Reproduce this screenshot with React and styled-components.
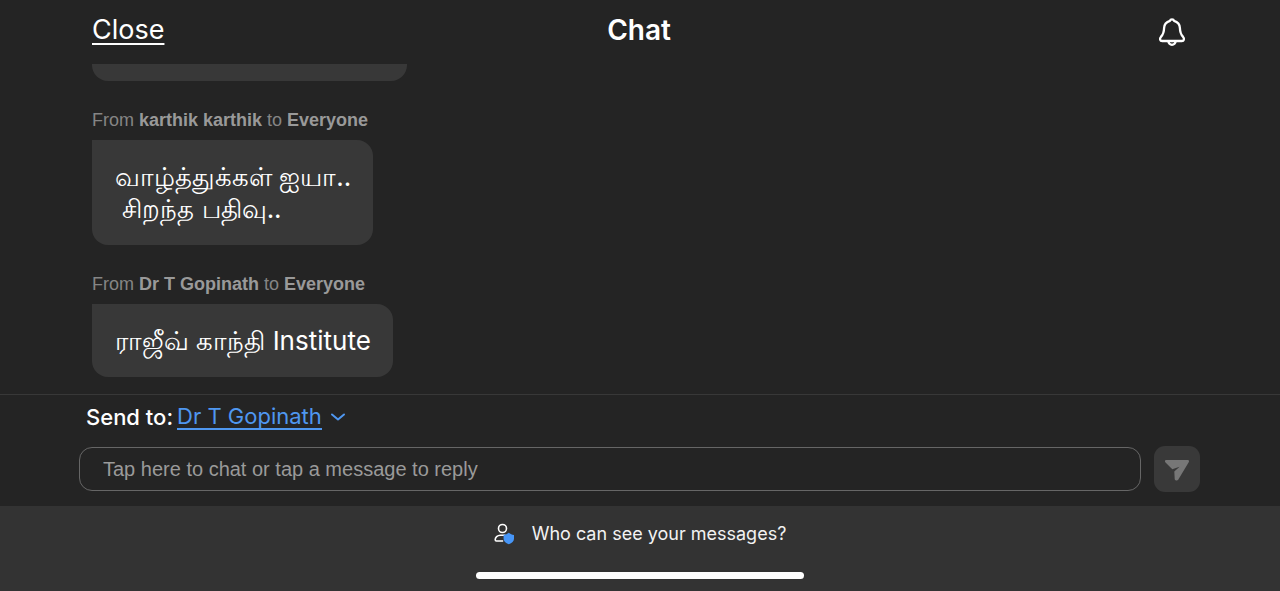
import styled, { createGlobalStyle } from "styled-components";

const GlobalStyle = createGlobalStyle`
  * {
    box-sizing: border-box;
  }

  body {
    margin: 0;
    background: #242424;
    color: #fff;
    font-family: Inter, "Noto Sans", sans-serif;
  }

  button,
  input,
  select {
    margin: 0;
    padding: 0;
    border: none;
    background: none;
    color: inherit;
    font: inherit;
  }
`;

const Wrapper = styled.div`
  display: flex;
  flex-direction: column;
  height: 100vh;
`;

const Header = styled.header`
  display: grid;
  grid-template-columns: 1fr auto 1fr;
  align-items: center;
  flex: none;
  height: 64px;
  padding: 0 94px 0 92px;
`;

const CloseButton = styled.button`
  justify-self: start;
  font-size: 27px;
  line-height: 32px;
  padding-bottom: 4px;
  text-decoration: underline;
  text-decoration-thickness: 2px;
  text-underline-offset: 4px;
`;

const Title = styled.h1`
  margin: 0;
  padding-bottom: 4px;
  font-size: 28px;
  font-weight: 600;
  line-height: 32px;
`;

const BellButton = styled.button`
  display: flex;
  justify-self: end;
`;

// 메시지가 넘치면 위쪽이 잘리도록 아래 정렬
const MessageList = styled.main`
  display: flex;
  flex: 1;
  flex-direction: column;
  justify-content: flex-end;
  align-items: flex-start;
  gap: 27px;
  min-height: 0;
  padding: 0 92px 17px;
  overflow: hidden;
`;

const Message = styled.article`
  flex: none;
`;

const Sender = styled.p`
  margin: 0 0 8px;
  color: #858585;
  font-family: "Liberation Sans", Arial, sans-serif;
  font-size: 18px;
  line-height: 24px;

  b {
    color: #999;
  }
`;

const Bubble = styled.div`
  width: fit-content;
  min-width: ${({ $minWidth }) => $minWidth || 0};
  min-height: 72px;
  padding: 21px 22px 20px 23px;
  border-radius: 0 16px 16px 16px;
  background: #383838;
  font-size: 26px;
  line-height: 32px;
  white-space: pre-wrap;
`;

const Composer = styled.form`
  flex: none;
  padding: 8px 80px 14px 79px;
  border-top: 1px solid #383838;
`;

const Recipient = styled.div`
  display: flex;
  align-items: center;
  gap: 4px;
  padding: 0 7px;
  font-size: 22px;
  line-height: 28px;
`;

const RecipientLabel = styled.label`
  font-weight: 500;
`;

const RecipientSelect = styled.select`
  appearance: none;
  field-sizing: content;
  margin-right: 4px;
  border-bottom: 2px solid #4f97f0;
  color: #4f97f0;
  line-height: 24px;
`;

const InputRow = styled.div`
  display: flex;
  align-items: center;
  gap: 13px;
  margin-top: 15px;
`;

const ChatInput = styled.input`
  flex: 1;
  min-width: 0;
  height: 44px;
  padding: 0 23px;
  border: 1px solid #666;
  border-radius: 13px;
  font-family: "Liberation Sans", Arial, sans-serif;
  font-size: 20px;

  &::placeholder {
    color: #9a9a9a;
    opacity: 1;
  }
`;

const SendButton = styled.button`
  display: flex;
  justify-content: center;
  align-items: center;
  width: 46px;
  height: 46px;
  border-radius: 11px;
  background: #393939;
`;

const Footer = styled.footer`
  display: flex;
  flex: none;
  flex-direction: column;
  align-items: center;
  gap: 24px;
  padding: 14px 0 12px;
  background: #333;
`;

const PrivacyButton = styled.button`
  display: flex;
  align-items: center;
  gap: 17px;
  color: #f2f2f2;
  font-size: 18px;
  line-height: 28px;
`;

const HomeIndicator = styled.div`
  width: 328px;
  height: 7px;
  border-radius: 4px;
  background: #fff;
`;

function BellIcon() {
  return (
    <svg width="28" height="30" viewBox="0 0 28 30" fill="none" stroke="#fff" strokeWidth="2.3" strokeLinejoin="round">
      <path d="M12 3.800c.4-2 3.600-2 4 0 3.700 1 5.800 3.700 5.900 7.200.1 4.500.9 6.500 3.200 8.900 1.500 1.700 1 4.100-1.300 4.100H4.200c-2.300 0-2.800-2.400-1.300-4.100 2.300-2.400 3.100-4.400 3.200-8.900.1-3.500 2.200-6.200 5.900-7.200Z" />
      <path d="M10.400 24.200a3.600 3.600 0 0 0 7.200 0" />
    </svg>
  );
}

function ChevronIcon() {
  return (
    <svg width="16" height="8" viewBox="0 0 16 8" fill="none" stroke="#4f97f0" strokeWidth="2" strokeLinecap="round" strokeLinejoin="round">
      <path d="M2 1.500 8 6.500l6-5" />
    </svg>
  );
}

function SendIcon() {
  return (
    <svg width="26" height="24" viewBox="0 0 26 24" fill="#777">
      <path d="M2.500 3h21c1.300 0 1.900 1.100 1.200 2.200L14.200 22.800c-.9 1.300-3.400.9-3.500-.7L10.300 14.500l5.300-4.700-7.300 2.400-6.800-6.800C.4 4.300 1 3 2.500 3Z" />
    </svg>
  );
}

function PersonShieldIcon() {
  return (
    <svg width="21" height="22" viewBox="0 0 21 22" fill="none">
      <circle cx="8.500" cy="5.500" r="4" stroke="#fff" strokeWidth="1.600" />
      <path d="M11.500 12.300H6.500c-3.300 0-5.300 2.100-5.300 4.500 0 .8.400 1.200 1.200 1.200h6.800" stroke="#fff" strokeWidth="1.600" />
      <path d="M14.800 9.800c1.500 1.300 3.200 2 5.200 2.200v3.800c0 2.500-2 4.300-5.200 5.500-3.200-1.200-5.200-3-5.200-5.500V12c2-.2 3.700-.9 5.200-2.200Z" fill="#4796f7" />
    </svg>
  );
}

function App() {
  return (
    <>
      <GlobalStyle />
      <Wrapper>
        <Header>
          <CloseButton type="button">Close</CloseButton>
          <Title>Chat</Title>
          <BellButton type="button" aria-label="Notifications">
            <BellIcon />
          </BellButton>
        </Header>

        <MessageList>
          <Message>
            <Bubble $minWidth="315px" />
          </Message>
          <Message>
            <Sender>
              From <b>karthik karthik</b> to <b>Everyone</b>
            </Sender>
            <Bubble lang="ta">{"வாழ்த்துக்கள் ஐயா..\n சிறந்த பதிவு.."}</Bubble>
          </Message>
          <Message>
            <Sender>
              From <b>Dr T Gopinath</b> to <b>Everyone</b>
            </Sender>
            <Bubble lang="ta">ராஜீவ் காந்தி Institute</Bubble>
          </Message>
        </MessageList>

        <Composer onSubmit={(e) => e.preventDefault()}>
          <Recipient>
            <RecipientLabel htmlFor="recipient">Send to:</RecipientLabel>
            <RecipientSelect id="recipient" defaultValue="gopinath">
              <option value="gopinath">Dr T Gopinath</option>
            </RecipientSelect>
            <ChevronIcon />
          </Recipient>
          <InputRow>
            <ChatInput
              type="text"
              aria-label="Message"
              placeholder="Tap here to chat or tap a message to reply"
            />
            <SendButton type="submit" aria-label="Send">
              <SendIcon />
            </SendButton>
          </InputRow>
        </Composer>

        <Footer>
          <PrivacyButton type="button">
            <PersonShieldIcon />
            Who can see your messages?
          </PrivacyButton>
          <HomeIndicator />
        </Footer>
      </Wrapper>
    </>
  );
}

export default App;
